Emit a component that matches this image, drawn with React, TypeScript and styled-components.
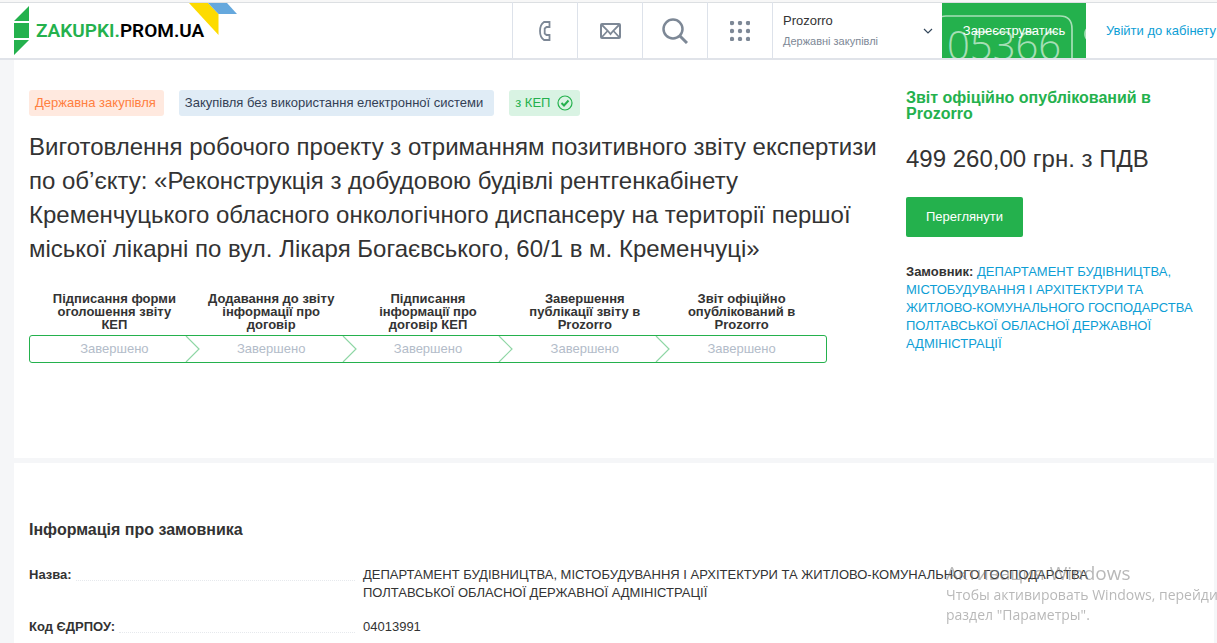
import React from "react";
import styled, { createGlobalStyle } from "styled-components";

const GlobalStyle = createGlobalStyle`
  * { box-sizing: border-box; }
  body {
    margin: 0;
    background: #f5f6f8;
    color: #333;
    font: 13px/18px "Liberation Sans", Arial, sans-serif;
    overflow-x: hidden;
  }
  h1, h2, h3, p, ol, dl, dd { margin: 0; padding: 0; }
`;

const Header = styled.header`
  position: relative;
  display: flex;
  height: 60px;
  background: #fff;
  border-top: 2px solid #f7f7f7;
  border-bottom: 2px solid #e0e3e9;
  box-shadow: inset 0 1px #dcdfe2;
`;

const Brand = styled.a`
  position: relative;
  flex: 1;
  display: flex;
  align-items: center;
  gap: 7px;
  padding: 2px 0 0 14px;
  text-decoration: none;
`;

const BrandName = styled.span`
  font: 600 19px/24px Roboto, sans-serif;
  color: #000;
  white-space: nowrap;
  em { font-style: normal; color: #24b14d; }
`;

const Ribbon = styled.svg`
  position: absolute;
  left: 188px;
  top: 1px;
`;

const IconButton = styled.button`
  width: 65px;
  padding: 2px 0 0;
  border: 0;
  border-left: 1px solid #dde2ea;
  background: none;
  color: #7d8896;
  display: flex;
  align-items: center;
  justify-content: center;
`;

const Portal = styled.button`
  width: 170px;
  border: 0;
  border-left: 1px solid #dde2ea;
  padding: 2px 9px 0 10px;
  background: none;
  display: flex;
  align-items: center;
  justify-content: space-between;
  text-align: left;
  font: 13px/20px "Liberation Sans", Arial, sans-serif;
  color: #333;
  small { display: block; font-size: 11px; color: #7d8896; }
`;

const Register = styled.button`
  width: 144px;
  margin-top: 1px;
  border: 0;
  background: #24b14d;
  color: #fff;
  font: 13px/18px "Liberation Sans", Arial, sans-serif;
`;

const Login = styled.a`
  width: 131px;
  display: flex;
  align-items: center;
  padding: 2px 0 0 20px;
  color: #0d9ed5;
  text-decoration: none;
  white-space: nowrap;
`;

const Stamp = styled.svg`
  position: absolute;
  right: 0;
  top: 0;
  pointer-events: none;
`;

const Page = styled.main`
  margin: 0 3px 0 14px;
  display: flex;
  flex-direction: column;
  gap: 5px;
`;

const Panel = styled.section`
  background: #fff;
  padding: 0 15px;
`;

const Summary = styled(Panel)`
  display: flex;
  gap: 28px;
  padding-top: 30px;
  min-height: 398px;
`;

const Details = styled.div`
  flex: 1;
  min-width: 0;
`;

const Tags = styled.div`
  display: flex;
  gap: 15px;
`;

const tones = {
  orange: ["#ffe9df", "#ff7f41"],
  blue: ["#e0ecf6", "#333f55"],
  green: ["#d9f3e3", "#24b14d"],
};

const Tag = styled.span<{ $tone: keyof typeof tones; $end: number }>`
  display: flex;
  align-items: center;
  gap: 7px;
  height: 26px;
  padding: 0 ${(p) => p.$end}px 0 6px;
  border-radius: 3px;
  background: ${(p) => tones[p.$tone][0]};
  color: ${(p) => tones[p.$tone][1]};
`;

const Title = styled.h1`
  margin-top: 14px;
  font-size: 24px;
  line-height: 34px;
  font-weight: normal;
`;

const StepGrid = styled.div`
  margin: 26px 51px 0 0;
`;

const StepLabels = styled.ol`
  display: flex;
  padding: 0 7px;
  list-style: none;
`;

const StepLabel = styled.li`
  flex: 1;
  padding: 0 12px;
  text-align: center;
  font-weight: bold;
  line-height: 13px;
`;

const StepBar = styled.ol`
  display: flex;
  height: 28px;
  margin-top: 4px;
  padding: 0 6px;
  border: 1px solid #24b14d;
  border-radius: 3px;
  list-style: none;
`;

const StepState = styled.li`
  position: relative;
  flex: 1;
  text-align: center;
  line-height: 26px;
  color: #b3bcc9;
  svg { position: absolute; right: -7px; top: 0; }
`;

const Side = styled.aside`
  width: 293px;
`;

const Status = styled.h2`
  font-size: 16px;
  line-height: 16px;
  color: #24b14d;
`;

const Price = styled.p`
  margin-top: 23px;
  font-size: 24px;
  line-height: 28px;
`;

const ViewButton = styled.button`
  display: block;
  width: 117px;
  height: 40px;
  margin: 24px 0 26px;
  border: 0;
  border-radius: 2px;
  background: #24b14d;
  color: #fff;
  font: 13px/18px "Liberation Sans", Arial, sans-serif;
`;

const Customer = styled.p`
  a { color: #0d9ed5; text-decoration: none; }
`;

const Info = styled(Panel)`
  padding-top: 57px;
  padding-bottom: 7px;
`;

const InfoTitle = styled.h2`
  font-size: 16px;
  line-height: 20px;
`;

const InfoList = styled.dl`
  display: grid;
  grid-template-columns: 326px 1fr;
  column-gap: 8px;
  row-gap: 16px;
  margin-top: 26px;
  dt {
    display: flex;
    gap: 4px;
    height: 18px;
    font-weight: bold;
  }
  dt::after {
    content: "";
    flex: 1;
    height: 14px;
    border-bottom: 1px dotted #e6e9ed;
  }
  dd { max-width: 740px; }
`;

const Activation = styled.aside`
  position: fixed;
  left: calc(100% - 271px);
  bottom: 18px;
  white-space: nowrap;
  font: 14px/20px "Open Sans", "Noto Sans", sans-serif;
  color: rgba(125, 125, 125, 0.55);
  pointer-events: none;
  strong {
    display: block;
    font-size: 19px;
    line-height: 24px;
    font-weight: normal;
  }
`;

const steps = [
  "Підписання форми оголошення звіту КЕП",
  "Додавання до звіту інформації про договір",
  "Підписання інформації про договір КЕП",
  "Завершення публікації звіту в Prozorro",
  "Звіт офіційно опублікований в Prozorro",
];

export default function App() {
  return (
    <>
      <GlobalStyle />
      <Header>
        <Brand href="#">
          <svg width="15" height="50" viewBox="0 0 15 50" fill="#24b14d">
            <path d="M0 15L15 0V15ZM0 17H15V32H0ZM0 34H15L0 49Z" />
          </svg>
          <BrandName><em>ZAKUPKI.</em>PROM.UA</BrandName>
          <Ribbon width="50" height="33" viewBox="0 0 50 33">
            <path d="M1 0H20L30.500 11V32Z" fill="#fddb00" />
            <path d="M20 0H39L49 11H30.500Z" fill="#65a8dd" />
          </Ribbon>
        </Brand>
        <IconButton aria-label="Телефон">
          <svg width="12" height="20" viewBox="0 0 12 20" fill="none" stroke="currentColor" strokeWidth="1.800">
            <path d="M5 1H10.500V6H7.500L5.700 7.500V12.500L7.500 14H10.500V19H5C2 17 1 13.500 1 10S2 3 5 1Z" />
          </svg>
        </IconButton>
        <IconButton aria-label="Повідомлення">
          <svg width="21" height="16" viewBox="0 0 21 16" fill="none" stroke="currentColor" strokeWidth="2">
            <rect x="1" y="1" width="19" height="14" rx="1" />
            <path d="M1.500 1.500L8 8L10.500 11L13 8L19.500 1.500M1.500 14.500L7.500 8M19.500 14.500L13.500 8" strokeWidth="1.800" />
          </svg>
        </IconButton>
        <IconButton aria-label="Пошук">
          <svg width="26" height="26" viewBox="0 0 26 26" fill="none" stroke="currentColor" strokeWidth="2.500">
            <circle cx="11" cy="11" r="9.500" />
            <path d="M17.700 17.700L25 25" strokeWidth="3" />
          </svg>
        </IconButton>
        <IconButton aria-label="Меню">
          <svg width="20" height="20" viewBox="0 0 20 20" fill="currentColor">
            {[2, 10, 18].map((y) => [2, 10, 18].map((x) => <circle key={`${x}-${y}`} cx={x} cy={y} r="2.200" />))}
          </svg>
        </IconButton>
        <Portal>
          <span>Prozorro<small>Державні закупівлі</small></span>
          <svg width="10" height="6" viewBox="0 0 10 6" fill="none" stroke="#33475b" strokeWidth="1.200">
            <path d="M1 1L5 5L9 1" />
          </svg>
        </Portal>
        <Register>Зареєструватись</Register>
        <Login href="#">Увійти до кабінету</Login>
        <Stamp width="285" height="56" viewBox="0 0 285 56" aria-hidden="true">
          <g fill="none" stroke="#fff" strokeOpacity="0.6" strokeWidth="1.700">
            <path d="M4 56V24Q4 14 14 14H128Q140 14 140 27V56" />
            <path d="M156 26Q153 28 153 32T156 38" />
          </g>
          <text x="15" y="58" fill="#fff" fillOpacity="0.6" fontFamily="Open Sans" fontWeight="300" fontSize="40">05366</text>
        </Stamp>
      </Header>
      <Page>
        <Summary>
          <Details>
            <Tags>
              <Tag $tone="orange" $end={8}>Державна закупівля</Tag>
              <Tag $tone="blue" $end={11}>Закупівля без використання електронної системи</Tag>
              <Tag $tone="green" $end={7}>
                з КЕП
                <svg width="16" height="16" viewBox="0 0 16 16" fill="none" stroke="currentColor">
                  <circle cx="8" cy="8" r="7" strokeWidth="1.200" />
                  <path d="M4.500 8L7 10.500L11.500 5.500" strokeWidth="2" />
                </svg>
              </Tag>
            </Tags>
            <Title>
              Виготовлення робочого проекту з отриманням позитивного звіту експертизи по об’єкту: «Реконструкція з
              добудовою будівлі рентгенкабінету Кременчуцького обласного онкологічного диспансеру на території першої
              міської лікарні по вул. Лікаря Богаєвського, 60/1 в м. Кременчуці»
            </Title>
            <StepGrid>
              <StepLabels>
                {steps.map((s) => <StepLabel key={s}>{s}</StepLabel>)}
              </StepLabels>
              <StepBar>
                {steps.map((s, i) => (
                  <StepState key={s}>
                    Завершено
                    {i < steps.length - 1 && (
                      <svg width="15" height="26" viewBox="0 0 15 26" fill="none" stroke="#8fd6a5" strokeWidth="1.200">
                        <path d="M1 0L14 13L1 26" />
                      </svg>
                    )}
                  </StepState>
                ))}
              </StepBar>
            </StepGrid>
          </Details>
          <Side>
            <Status>Звіт офіційно опублікований в Prozorro</Status>
            <Price>499 260,00 грн. з ПДВ</Price>
            <ViewButton>Переглянути</ViewButton>
            <Customer>
              <b>Замовник:</b>{" "}
              <a href="#">
                ДЕПАРТАМЕНТ БУДІВНИЦТВА, МІСТОБУДУВАННЯ І АРХІТЕКТУРИ ТА ЖИТЛОВО-КОМУНАЛЬНОГО ГОСПОДАРСТВА ПОЛТАВСЬКОЇ
                ОБЛАСНОЇ ДЕРЖАВНОЇ АДМІНІСТРАЦІЇ
              </a>
            </Customer>
          </Side>
        </Summary>
        <Info>
          <InfoTitle>Інформація про замовника</InfoTitle>
          <InfoList>
            <dt>Назва:</dt>
            <dd>
              ДЕПАРТАМЕНТ БУДІВНИЦТВА, МІСТОБУДУВАННЯ І АРХІТЕКТУРИ ТА ЖИТЛОВО-КОМУНАЛЬНОГО ГОСПОДАРСТВА ПОЛТАВСЬКОЇ
              ОБЛАСНОЇ ДЕРЖАВНОЇ АДМІНІСТРАЦІЇ
            </dd>
            <dt>Код ЄДРПОУ:</dt>
            <dd>04013991</dd>
          </InfoList>
        </Info>
      </Page>
      <Activation>
        <strong>Активация Windows</strong>
        Чтобы активировать Windows, перейдите в<br />
        раздел "Параметры".
      </Activation>
    </>
  );
}
